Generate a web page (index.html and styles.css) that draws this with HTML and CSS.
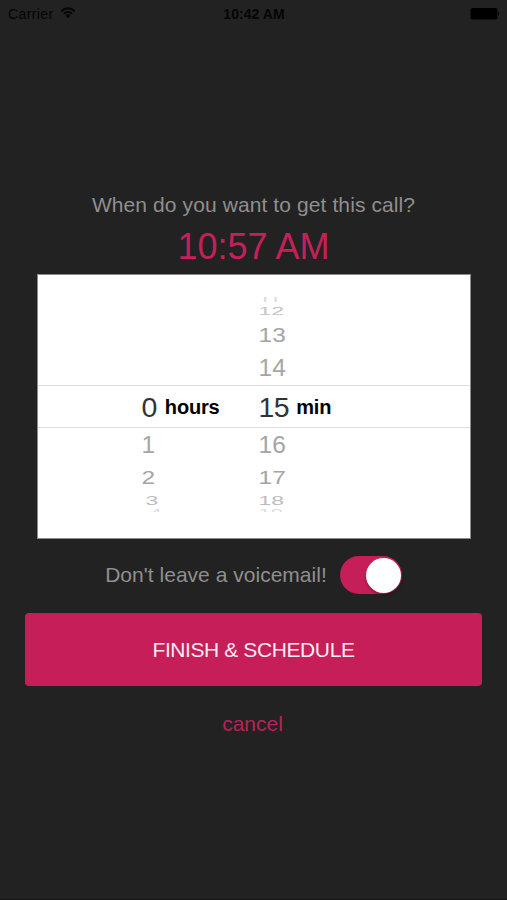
FILE: index.html
```html
<!DOCTYPE html>
<html lang="en">
<head>
<meta charset="utf-8">
<title>Schedule call</title>
<link rel="stylesheet" href="styles.css">
</head>
<body>
<header class="status">
  <div class="carrier"><span>Carrier</span>
    <svg class="wifi" viewBox="0 0 16 12" width="16" height="12">
      <path d="M1.2 4.2Q8-1.6 14.8 4.2M3.8 6.8Q8 3.2 12.2 6.8" fill="none" stroke="#050505" stroke-width="1.9"/>
      <path d="M5.5 8.4Q8 6.3 10.5 8.4L8 11.2Z" fill="#050505"/>
    </svg>
  </div>
  <div class="clock">10:42 AM</div>
  <svg class="battery" viewBox="0 0 30 12" width="30" height="12">
    <rect x="0.5" y="0" width="27" height="11.5" rx="1.8"/>
    <path d="M28 3.5Q30 5.7 28 8Z"/>
  </svg>
</header>
<main>
  <p class="question"><span>When do you want to get this call?</span></p>
  <h1 class="time"><span>10:57 AM</span></h1>
  <section class="picker">
    <div class="wheel hours">
      <div class="row r-top"></div>
      <div class="row r-12"></div>
      <div class="row r-13"></div>
      <div class="row r-14"></div>
      <div class="row current"><span class="digit">0</span><b>hours</b></div>
      <div class="row r-16"><span class="digit">1</span></div>
      <div class="row r-17"><span class="digit">2</span></div>
      <div class="row r-18"><span class="digit">3</span></div>
      <div class="row r-end"><span class="digit">4</span></div>
    </div>
    <div class="wheel minutes">
      <div class="row r-top"><span class="digit">11</span></div>
      <div class="row r-12"><span class="digit">12</span></div>
      <div class="row r-13"><span class="digit">13</span></div>
      <div class="row r-14"><span class="digit">14</span></div>
      <div class="row current"><span class="digit">15</span><b>min</b></div>
      <div class="row r-16"><span class="digit">16</span></div>
      <div class="row r-17"><span class="digit">17</span></div>
      <div class="row r-18"><span class="digit">18</span></div>
      <div class="row r-end"><span class="digit">19</span></div>
    </div>
  </section>
  <div class="option">
    <span class="label">Don't leave a voicemail!</span>
    <div class="switch"><div class="knob"></div></div>
  </div>
  <button class="finish">FINISH &amp; SCHEDULE</button>
  <a class="cancel">cancel</a>
</main>
</body>
</html>
```
FILE: styles.css
```css
* { box-sizing: border-box; }
body {
  margin: 0;
  width: 507px;
  height: 900px;
  overflow: hidden;
  background: #222222;
  border-bottom: 1px solid #190f12;
  font-family: "Liberation Sans", Arial, sans-serif;
}
.status {
  display: grid;
  grid-template-columns: 1fr auto 1fr;
  align-items: center;
  height: 28px;
  padding: 0 7px 0 8px;
  color: #050505;
  font-size: 14px;
}
.carrier { display: flex; align-items: center; gap: 6px; letter-spacing: 0.4px; }
.wifi { margin-top: -2px; }
.clock { font-weight: bold; font-size: 14px; letter-spacing: 0.05px; }
.battery { justify-self: end; margin-top: -1px; fill: #000; }
main { display: flex; flex-direction: column; align-items: center; padding-top: 162px; }
.question {
  margin: 0;
  height: 30px;
  line-height: 30px;
  font-size: 21px;
  letter-spacing: 0.1px;
  color: #8f8f8f;
  white-space: nowrap;
}
.time {
  margin: 0;
  height: 54px;
  line-height: 54px;
  font-size: 36px;
  font-weight: normal;
  color: #c4205a;
}
.picker {
  display: grid;
  grid-template-columns: 220px 1fr;
  width: 434px;
  height: 265px;
  background: #fff;
  border: 1px solid #8a8a8a;
}
.wheel { display: flex; flex-direction: column; padding-top: 22px; }
.row {
  display: flex;
  align-items: center;
  flex: none;
  color: #a5a5a5;
  font-size: 24.5px;
}
.hours .row { padding-left: 104px; }
.hours .r-18 { padding-left: 108px; }
.hours .r-end { padding-left: 112px; }
.minutes .row { padding-left: 1px; }
.digit { display: block; line-height: 28px; }
.r-top { height: 5px; overflow: hidden; align-items: flex-end; color: #dcdcdc; font-size: 22px; }
.r-top .digit { line-height: 4px; transform: translateY(-3px); }
.r-12 { height: 18px; color: #c4c4c4; font-size: 23px; }
.r-12 .digit { transform: scaleY(0.48); }
.r-13 { height: 30px; }
.r-13 .digit { transform: translateY(1px) scaleY(0.79); }
.r-14 { height: 35px; }
.r-14 .digit { transform: translateY(0.5px) scaleY(0.98); }
.row.current {
  height: 43px;
  border-top: 1px solid #dedede;
  border-bottom: 1px solid #dedede;
  color: #333;
  font-size: 28.5px;
}
.current .digit { letter-spacing: -0.5px; }
.current b { color: #000; font-size: 20px; margin-left: 8px; padding-top: 2px; letter-spacing: -0.2px; }
.minutes .current b { margin-left: 7px; }
.r-16 { height: 33px; }
.r-16 .digit { transform: scaleY(0.96); }
.r-17 { height: 32px; }
.r-17 .digit { transform: translateY(0.5px) scaleY(0.77); }
.r-18 { height: 15px; color: #bcbcbc; font-size: 23px; }
.r-18 .digit { transform: scaleY(0.53); }
.r-end { height: 4px; overflow: hidden; align-items: flex-start; color: #dcdcdc; font-size: 22px; }
.r-end .digit { line-height: 19px; transform: scaleY(0.5); transform-origin: top; }
.option { display: flex; align-items: center; height: 38px; margin-top: 17px; gap: 13px; }
.label { font-size: 21px; letter-spacing: 0.02px; color: #8f8f8f; }
.switch {
  display: flex;
  justify-content: flex-end;
  align-items: center;
  width: 62px;
  height: 38px;
  padding-right: 1px;
  border-radius: 19px;
  background: #c51e59;
}
.knob { width: 35px; height: 35px; border-radius: 50%; background: #fff; box-shadow: 0 2px 3px rgba(60, 0, 30, 0.35); }
.finish {
  width: 457px;
  height: 73px;
  margin-top: 19px;
  border: 0;
  border-radius: 4px;
  background: #c51e59;
  color: #fdeaf1;
  font: 21px "Liberation Sans", Arial, sans-serif;
  letter-spacing: -0.4px;
}
.cancel { margin-top: 26px; line-height: 24px; font-size: 21px; color: #b9225a; margin-right: 2px; }
```
